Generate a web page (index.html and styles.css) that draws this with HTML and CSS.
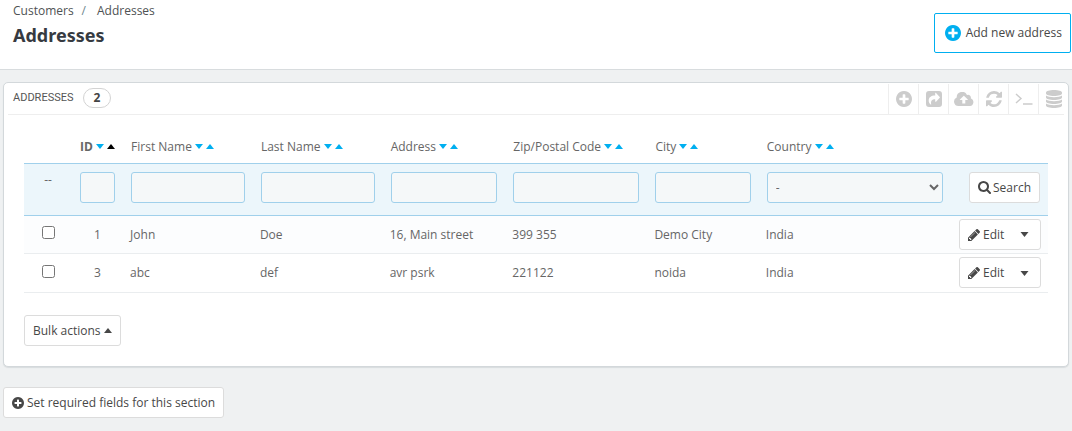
FILE: index.html
```html
<!DOCTYPE html>
<html lang="en">
<head>
<meta charset="utf-8">
<title>Addresses</title>
<link rel="stylesheet" href="styles.css">
</head>
<body>
<svg class="sprite" aria-hidden="true">
  <symbol id="plus" viewBox="128 128 1536 1536"><path d="M1344 960v-128q0-26-19-45t-45-19h-256v-256q0-26-19-45t-45-19h-128q-26 0-45 19t-19 45v256h-256q-26 0-45 19t-19 45v128q0 26 19 45t45 19h256v256q0 26 19 45t45 19h128q26 0 45-19t19-45v-256h256q26 0 45-19t19-45zm320-64q0 209-103 385.5t-279.5 279.5-385.5 103-385.5-103-279.5-279.5-103-385.5 103-385.5 279.5-279.5 385.5-103 385.5 103 279.5 279.5 103 385.5z"/></symbol>
  <symbol id="search" viewBox="64 128 1664 1664"><path d="M1216 832q0-185-131.5-316.5t-316.5-131.5-316.5 131.5-131.5 316.5 131.5 316.5 316.5 131.5 316.5-131.5 131.5-316.5zm512 832q0 52-38 90t-90 38q-54 0-90-38l-343-342q-179 124-399 124-143 0-273.5-55.5t-225-150-150-225-55.5-273.5 55.5-273.5 150-225 225-150 273.5-55.5 273.5 55.5 225 150 150 225 55.5 273.5q0 220-124 399l343 343q37 37 37 90z"/></symbol>
  <symbol id="pencil" viewBox="128 149 1515 1515"><path d="M491 1536l91-91-235-235-91 91v107h128v128h107zm523-928q0-22-22-22-10 0-17 7l-542 542q-7 7-7 17 0 22 22 22 10 0 17-7l542-542q7-7 7-17zm-54-192l416 416-832 832h-416v-416zm683 96q0 53-37 90l-166 166-416-416 166-165q36-38 90-38 53 0 91 38l235 234q37 39 37 91z"/></symbol>
  <symbol id="refresh" viewBox="128 128 1536 1536"><path d="M1639 1056q0 5-1 7-64 268-268 434.5t-478 166.5q-146 0-282.5-55t-243.5-157l-129 129q-19 19-45 19t-45-19-19-45v-448q0-26 19-45t45-19h448q26 0 45 19t19 45-19 45l-137 137q71 66 161 102t187 36q134 0 250-65t186-179q11-17 53-117 8-23 30-23h192q13 0 22.5 9.5t9.500 22.500zm25-800v448q0 26-19 45t-45 19h-448q-26 0-45-19t-19-45 19-45l138-138q-148-137-349-137-134 0-250 65t-186 179q-11 17-53 117-8 23-30 23h-199q-13 0-22.5-9.5t-9.5-22.5v-7q65-268 270-434.5t480-166.5q146 0 284 55.5t245 156.5l130-129q19-19 45-19t45 19 19 45z"/></symbol>
  <symbol id="share" viewBox="0 0 16 16"><path fill-rule="evenodd" d="M3 0h10a3 3 0 0 1 3 3v10a3 3 0 0 1-3 3H3a3 3 0 0 1-3-3V3a3 3 0 0 1 3-3zm6.200 2.300v2.200C5 4.500 2.700 6.500 2.700 9.500c0 1.600.7 3 2 4.100.3.200.6 0 .5-.4C4.600 10 5.800 8.200 9.200 8.200v2.200c0 .5.500.6.800.3l3.700-3.900c.3-.3.300-.6 0-.9L10 2c-.3-.3-.8-.2-.8.3z"/></symbol>
  <symbol id="cloud" viewBox="0 0 20 14"><path fill-rule="evenodd" d="M4.500 14A4.500 4.500 0 0 1 2.700 5.400 5.400 5.400 0 0 1 13 3a2.800 2.800 0 0 1 3.800 3.300A4 4 0 0 1 16 14zM8.300 11.500h3V8h2.200c.4 0 .5-.3.300-.6L10.200 3.900a.5.500 0 0 0-.7 0L5.900 7.400c-.2.300-.1.600.3.600h2.100z"/></symbol>
  <symbol id="terminal" viewBox="0 0 18 12"><path d="M1 1l5 4.500L1 10M8 11h9.500" fill="none" stroke="currentColor" stroke-width="1.400"/></symbol>
  <symbol id="database" viewBox="0 0 16 18"><path d="M0 2.500C0 1 3.500 0 8 0s8 1 8 2.500v1C16 5 12.500 6 8 6S0 5 0 3.500zM0 5.500C1.500 6.600 4.500 7.200 8 7.200s6.500-.6 8-1.700v2C16 9 12.500 10 8 10S0 9 0 7.500zM0 9.500c1.500 1.100 4.500 1.700 8 1.700s6.500-.6 8-1.700v2c0 1.500-3.500 2.500-8 2.500s-8-1-8-2.500zM0 13.500c1.500 1.100 4.500 1.700 8 1.700s6.500-.6 8-1.700v2c0 1.500-3.500 2.500-8 2.500s-8-1-8-2.500z"/></symbol>
  <symbol id="down" viewBox="0 0 8 5"><path d="M0 0h8L4 5z"/></symbol>
  <symbol id="up" viewBox="0 0 8 5"><path d="M0 5h8L4 0z"/></symbol>
</svg>

<header class="page-head">
  <div>
    <nav class="crumbs" aria-label="Breadcrumb"><a href="#">Customers</a><span class="slash">/</span><a href="#">Addresses</a></nav>
    <h1>Addresses</h1>
  </div>
  <button class="btn btn-add" type="button"><svg class="icon-lg"><use href="#plus"/></svg>Add new address</button>
</header>

<main>
  <section class="panel">
    <div class="panel-head">
      <h2>ADDRESSES</h2><span class="badge">2</span>
      <div class="tools">
        <button type="button" aria-label="Add new"><svg class="icon-lg"><use href="#plus"/></svg></button>
        <button type="button" aria-label="Export"><svg class="icon-lg"><use href="#share"/></svg></button>
        <button type="button" aria-label="Import"><svg class="icon-cloud"><use href="#cloud"/></svg></button>
        <button type="button" aria-label="Refresh list"><svg class="icon-lg"><use href="#refresh"/></svg></button>
        <button type="button" aria-label="Show SQL query"><svg class="icon-term"><use href="#terminal"/></svg></button>
        <button type="button" aria-label="Export to SQL Manager"><svg class="icon-db"><use href="#database"/></svg></button>
      </div>
    </div>

    <div class="panel-body">
      <table>
        <colgroup><col class="c-check"><col class="c-id"><col class="c-name"><col class="c-name"><col class="c-address"><col class="c-zip"><col class="c-city"><col class="c-country"><col class="c-action"></colgroup>
        <thead>
          <tr class="titles">
            <td></td>
            <th class="sorted" scope="col">ID<a href="#" aria-label="ID descending"><svg class="caret"><use href="#down"/></svg></a><a class="active" href="#" aria-label="ID ascending"><svg class="caret"><use href="#up"/></svg></a></th>
            <th scope="col">First Name<a href="#" aria-label="First name descending"><svg class="caret"><use href="#down"/></svg></a><a href="#" aria-label="First name ascending"><svg class="caret"><use href="#up"/></svg></a></th>
            <th scope="col">Last Name<a href="#" aria-label="Last name descending"><svg class="caret"><use href="#down"/></svg></a><a href="#" aria-label="Last name ascending"><svg class="caret"><use href="#up"/></svg></a></th>
            <th scope="col">Address<a href="#" aria-label="Address descending"><svg class="caret"><use href="#down"/></svg></a><a href="#" aria-label="Address ascending"><svg class="caret"><use href="#up"/></svg></a></th>
            <th scope="col">Zip/Postal Code<a href="#" aria-label="Zip descending"><svg class="caret"><use href="#down"/></svg></a><a href="#" aria-label="Zip ascending"><svg class="caret"><use href="#up"/></svg></a></th>
            <th scope="col">City<a href="#" aria-label="City descending"><svg class="caret"><use href="#down"/></svg></a><a href="#" aria-label="City ascending"><svg class="caret"><use href="#up"/></svg></a></th>
            <th scope="col">Country<a href="#" aria-label="Country descending"><svg class="caret"><use href="#down"/></svg></a><a href="#" aria-label="Country ascending"><svg class="caret"><use href="#up"/></svg></a></th>
            <td></td>
          </tr>
          <tr class="filters">
            <td class="center">--</td>
            <td><input type="text" aria-label="Filter by ID"></td>
            <td><input type="text" aria-label="Filter by first name"></td>
            <td><input type="text" aria-label="Filter by last name"></td>
            <td><input type="text" aria-label="Filter by address"></td>
            <td><input type="text" aria-label="Filter by zip/postal code"></td>
            <td><input type="text" aria-label="Filter by city"></td>
            <td><select aria-label="Filter by country"><option>-</option></select></td>
            <td class="right"><button class="btn btn-search" type="button"><svg class="icon-search"><use href="#search"/></svg>Search</button></td>
          </tr>
        </thead>
        <tbody>
          <tr>
            <td class="center"><input type="checkbox" aria-label="Select address 1"></td>
            <td class="center">1</td><td>John</td><td>Doe</td><td>16, Main street</td><td>399 355</td><td>Demo City</td><td>India</td>
            <td class="actions"><div class="group"><button class="edit" type="button"><svg class="icon"><use href="#pencil"/></svg>Edit</button><button class="more" type="button" aria-label="More actions"><svg class="caret-lg"><use href="#down"/></svg></button></div></td>
          </tr>
          <tr>
            <td class="center"><input type="checkbox" aria-label="Select address 3"></td>
            <td class="center">3</td><td>abc</td><td>def</td><td>avr psrk</td><td>221122</td><td>noida</td><td>India</td>
            <td class="actions"><div class="group"><button class="edit" type="button"><svg class="icon"><use href="#pencil"/></svg>Edit</button><button class="more" type="button" aria-label="More actions"><svg class="caret-lg"><use href="#down"/></svg></button></div></td>
          </tr>
        </tbody>
      </table>
      <button class="btn btn-bulk" type="button">Bulk actions<svg class="caret"><use href="#up"/></svg></button>
    </div>
  </section>

  <button class="btn" type="button"><svg class="icon"><use href="#plus"/></svg>Set required fields for this section</button>
</main>
</body>
</html>
```
FILE: styles.css
```css
* { box-sizing: border-box; }
body {
  margin: 0;
  background: #eff1f2;
  color: #666;
  font: 12px/16px "Open Sans", "Noto Sans", sans-serif;
}
button, input, select { font: inherit; color: inherit; }
svg { display: block; flex: none; fill: currentColor; }
.sprite { position: absolute; width: 0; height: 0; }
.icon { width: 12px; height: 12px; }
.icon-search { width: 13px; height: 13px; }
.icon-lg { width: 16px; height: 16px; }
.icon-cloud { width: 20px; height: 14px; }
.icon-term { width: 18px; height: 12px; }
.icon-db { width: 16px; height: 18px; }
.caret { width: 8px; height: 5px; }
.caret-lg { width: 9px; height: 5px; }

.page-head {
  display: flex;
  justify-content: space-between;
  align-items: flex-start;
  min-height: 70px;
  padding: 3px 1px 0 13px;
  background: #fff;
  border-bottom: 1px solid #d8dcde;
}
.crumbs { color: #4e5254; }
.crumbs a { color: inherit; text-decoration: none; }
.slash { margin: 0 11px 0 8px; color: #6c868e; }
h1 {
  margin: 4px 0 0;
  color: #363a41;
  font: bold 18px/24px "Noto Sans", "Open Sans", sans-serif;
}

.btn {
  display: inline-flex;
  align-items: center;
  gap: 3px;
  height: 31px;
  padding: 1px 8px 0;
  background: #fff;
  border: 1px solid #dcdcdc;
  border-radius: 3px;
  color: #474747;
  white-space: nowrap;
}
.btn-search { gap: 2px; }
.btn-add {
  height: 40px;
  margin-top: 10px;
  padding: 0 8px 0 10px;
  gap: 5px;
  border-color: #00aff0;
  border-radius: 2px;
}
.btn-add svg { color: #00aff0; }

main { padding: 12px 3px; }
.panel {
  margin-bottom: 20px;
  padding: 1px 4px 20px;
  background: #fff;
  border: 1px solid #d3d8db;
  border-radius: 5px;
  box-shadow: 0 1px 1px #d8dcde;
}
.panel-head {
  display: flex;
  align-items: center;
  height: 31px;
  padding-left: 5px;
  border-bottom: 1px solid #eee;
}
h2 {
  margin: 0;
  color: #555;
  font: 11px/16px Roboto, "Open Sans", sans-serif;
}
.badge {
  margin-left: 9px;
  padding: 0 10px;
  border: 1px solid #d3d3d3;
  border-radius: 10px;
  color: #444;
  font-weight: bold;
  line-height: 18px;
}
.panel-head h2, .panel-head .badge { margin-bottom: 2px; }
.tools { display: flex; align-self: stretch; margin-left: auto; }
.tools button {
  display: grid;
  place-items: center;
  width: 30px;
  padding: 0;
  background: none;
  border: 0;
  border-left: 1px solid #eee;
  color: #ccc;
}
.tools button:last-child { width: 26px; padding-left: 5px; }

.panel-body { padding: 16px 16px 0; }
table { width: 100%; table-layout: fixed; border-collapse: collapse; }
td, th { padding: 0 7px; text-align: left; font-weight: normal; }
th { white-space: nowrap; }
.c-check { width: 48px; }
.c-id { width: 5%; }
.c-name { width: 12.7%; }
.c-address { width: 12%; }
.c-zip { width: 13.9%; }
.c-city { width: 10.9%; }
.c-country { width: 18.8%; }
.c-action { width: 97px; }
.titles th { height: 32px; padding: 1px 0 0 8px; }
.sorted { font-weight: bold; }
th a { display: inline-block; margin-left: 3px; color: #00aff0; vertical-align: 2px; }
th a.active { color: #000; }
.filters td {
  height: 52px;
  padding: 8px 8px 12px;
  background: #ecf6fb;
  border-top: 1px solid #a0d0eb;
  border-bottom: 1px solid #a0d0eb;
  vertical-align: top;
}
.filters input, .filters select {
  display: block;
  width: 100%;
  height: 31px;
  background: #f5f8f9;
  border: 1px solid #a0d0eb;
  border-radius: 3px;
}
.filters select { padding-left: 4px; }
td.center { text-align: center; }
td.right { text-align: right; }
tbody td { height: 38px; padding-top: 1px; border-bottom: 1px solid #eaedef; }
tbody tr:first-child td { background: #fcfdfe; }
tbody tr:last-child td { height: 39px; }
input[type="checkbox"] { display: block; width: 13px; height: 13px; margin: 0 auto 4px; }
tbody td.actions { padding: 0; }
.group {
  display: flex;
  width: 82px;
  height: 31px;
  margin-left: 8px;
  background: #fff;
  border: 1px solid #dcdcdc;
  border-radius: 3px;
  color: #474747;
}
.group button { display: flex; align-items: center; padding: 1px 8px 0; background: none; border: 0; }
.group .edit { gap: 3px; }
.group .more { margin-left: auto; padding-right: 11px; }
.btn-bulk { margin-top: 22px; }
```
